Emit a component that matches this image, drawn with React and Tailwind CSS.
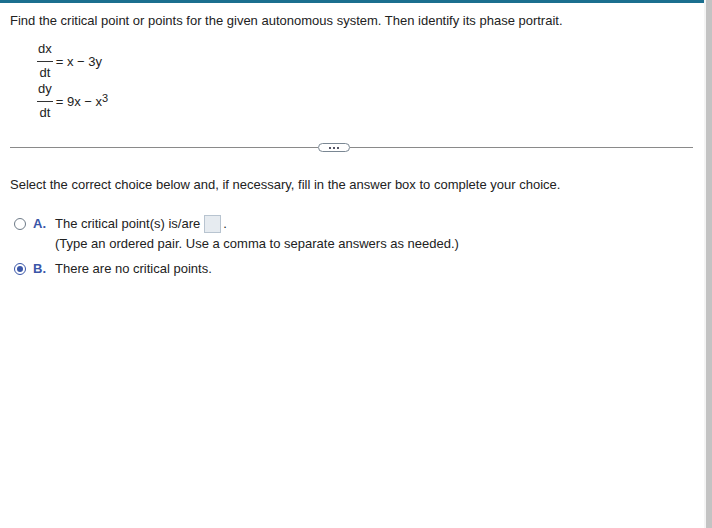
import React from 'react';

const Frac = ({ top, bottom }) => (
    <span className="inline-flex flex-col items-center mx-[1px]">
        <span className="leading-[16px] pb-[4px] px-[1px]">{top}</span>
        <span className="w-full h-px bg-[#333]"></span>
        <span className="leading-[16px] pt-[3px] px-[1px]">{bottom}</span>
    </span>
)

const App = () => {
    return (
        <div className="relative w-[712px] h-[528px] bg-white overflow-hidden text-[13px] text-[#222] font-['Liberation_Sans',Arial,sans-serif]">
            <div className="flex h-full">
                <div className="w-[704px] h-full flex flex-col">
                    <div className="h-[3px] bg-[#1b6f8f]"></div>
                    <div className="pl-[10px] pt-[10px] leading-[15px]">
                        Find the critical point or points for the given autonomous system. Then identify its phase portrait.
                    </div>
                    <div className="pl-[36px] pt-[13px] flex flex-col">
                        <div className="flex items-center">
                            <Frac top="dx" bottom="dt" />
                            <span className="ml-[2px] leading-[15px]">= x − 3y</span>
                        </div>
                        <div className="flex items-center">
                            <Frac top="dy" bottom="dt" />
                            <span className="ml-[2px] leading-[15px]">= 9x − x<sup className="text-[11px] relative -top-[4px]">3</sup></span>
                        </div>
                    </div>
                    <div className="mt-[22px] ml-[10px] mr-[11px] h-[9px] flex items-center">
                        <div className="w-[308px] h-px bg-[#8a8a8a]"></div>
                        <div className="w-[32px] h-[9px] rounded-full border border-[#7a8793] bg-white flex items-center justify-center gap-[2px]">
                            <span className="w-[2px] h-[2px] bg-[#556]"></span>
                            <span className="w-[2px] h-[2px] bg-[#556]"></span>
                            <span className="w-[2px] h-[2px] bg-[#556]"></span>
                        </div>
                        <div className="flex-1 h-px bg-[#8a8a8a]"></div>
                    </div>
                    <div className="pl-[10px] pt-[25px] leading-[15px]">
                        Select the correct choice below and, if necessary, fill in the answer box to complete your choice.
                    </div>
                    <div className="pl-[14px] pt-[23px] flex flex-col">
                        <div className="flex items-start">
                            <span className="mt-[3px] w-[12px] h-[12px] rounded-full border border-[#6e7b88] bg-white"></span>
                            <span className="ml-[7px] w-[22px] font-bold text-[#3a56a8] leading-[18px]">A.</span>
                            <div className="flex flex-col">
                                <div className="flex items-center h-[18px]">
                                    The critical point(s) is/are
                                    <span className="ml-[4px] w-[17px] h-[18px] border border-[#b8c4d0] bg-[#e6ebf0]"></span>
                                    <span className="ml-[2px]">.</span>
                                </div>
                                <div className="mt-[3px] leading-[15px]">(Type an ordered pair. Use a comma to separate answers as needed.)</div>
                            </div>
                        </div>
                        <div className="flex items-center mt-[10px] h-[15px] leading-[15px]">
                            <span className="w-[12px] h-[12px] rounded-full border border-[#3a56a8] bg-white flex items-center justify-center">
                                <span className="w-[6px] h-[6px] rounded-full bg-[#3a56a8]"></span>
                            </span>
                            <span className="ml-[7px] w-[22px] font-bold text-[#3a56a8]">B.</span>
                            <span>There are no critical points.</span>
                        </div>
                    </div>
                </div>
                <div className="w-[2px] h-full bg-[#f4f4f4]"></div>
                <div className="flex-1 h-full bg-[#c3c3c3]"></div>
            </div>
        </div>
    )
}

export default App
